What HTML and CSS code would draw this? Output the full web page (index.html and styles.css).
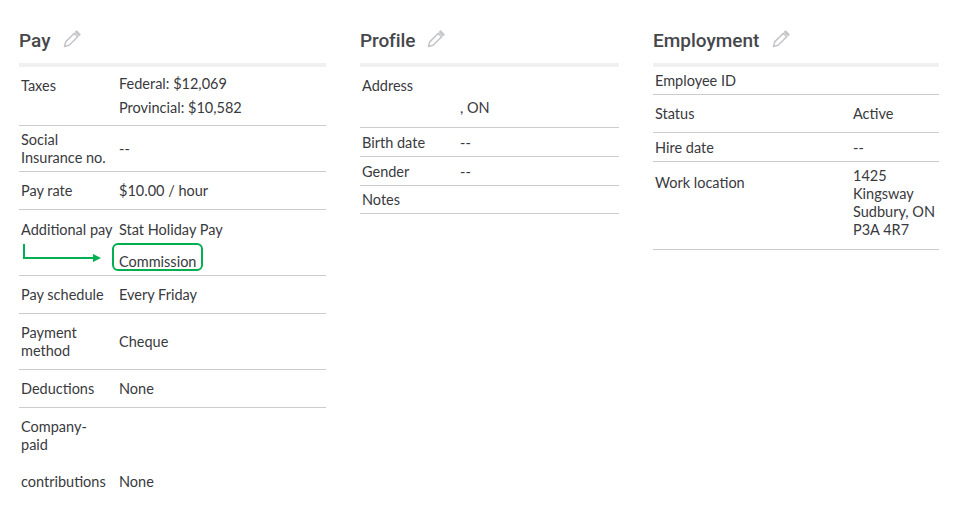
FILE: index.html
```html
<!DOCTYPE html>
<html>

<head lang="en">
    <meta charset="UTF-8">
    <title>Employee details</title>
    <link rel="stylesheet" href="styles.css">
</head>

<body>
    <div class="page">
        <div class="section section-pay">
            <div class="head">
                <h2>Pay</h2>
                <svg class="edit" width="18" height="18" viewBox="0 0 18 18"><path d="M1.5 16.500l1.200-4.600 8.600-8.600 3.400 3.400-8.600 8.600z" fill="none" stroke="#c4c6c9" stroke-width="1.600" stroke-linejoin="round"/><path d="M12.600 2l1-1 3.400 3.400-1 1z" fill="#c4c6c9" stroke="#c4c6c9" stroke-width="1.400" stroke-linejoin="round"/></svg>
            </div>
            <div class="row tall">
                <div class="label">Taxes</div>
                <div class="value">
                    <div class="line">Federal: $12,069</div>
                    <div class="line">Provincial: $10,582</div>
                </div>
            </div>
            <div class="row short-two">
                <div class="label">Social<br>Insurance no.</div>
                <div class="value">--</div>
            </div>
            <div class="row">
                <div class="label">Pay rate</div>
                <div class="value">$10.00 / hour</div>
            </div>
            <div class="row extra">
                <div class="label">Additional pay</div>
                <div class="value">
                    <div>Stat Holiday Pay</div>
                    <div class="commission">Commission<span class="callout"></span></div>
                </div>
                <svg class="arrow" width="80" height="18" viewBox="0 0 80 18"><path d="M1 0v14h70" fill="none" stroke="#00b050" stroke-width="2"/><path d="M70 10l8 4-8 4z" fill="#00b050"/></svg>
            </div>
            <div class="row">
                <div class="label">Pay schedule</div>
                <div class="value">Every Friday</div>
            </div>
            <div class="row">
                <div class="label">Payment<br>method</div>
                <div class="value">Cheque</div>
            </div>
            <div class="row">
                <div class="label">Deductions</div>
                <div class="value">None</div>
            </div>
            <div class="row last">
                <div class="label">Company-<br>paid<div class="gap">contributions</div></div>
                <div class="value">None</div>
            </div>
        </div>

        <div class="section section-profile">
            <div class="head">
                <h2>Profile</h2>
                <svg class="edit" width="18" height="18" viewBox="0 0 18 18"><path d="M1.5 16.500l1.200-4.600 8.600-8.600 3.400 3.400-8.600 8.600z" fill="none" stroke="#c4c6c9" stroke-width="1.600" stroke-linejoin="round"/><path d="M12.600 2l1-1 3.400 3.400-1 1z" fill="#c4c6c9" stroke="#c4c6c9" stroke-width="1.400" stroke-linejoin="round"/></svg>
            </div>
            <div class="row tall address">
                <div class="label">Address</div>
                <div class="value">
                    <div class="line">&nbsp;</div>
                    <div class="line">, ON</div>
                </div>
            </div>
            <div class="row slim">
                <div class="label">Birth date</div>
                <div class="value">--</div>
            </div>
            <div class="row slim">
                <div class="label">Gender</div>
                <div class="value">--</div>
            </div>
            <div class="row slimmer">
                <div class="label">Notes</div>
                <div class="value"></div>
            </div>
        </div>

        <div class="section section-job">
            <div class="head">
                <h2>Employment</h2>
                <svg class="edit" width="18" height="18" viewBox="0 0 18 18"><path d="M1.5 16.500l1.200-4.600 8.600-8.600 3.400 3.400-8.600 8.600z" fill="none" stroke="#c4c6c9" stroke-width="1.600" stroke-linejoin="round"/><path d="M12.600 2l1-1 3.400 3.400-1 1z" fill="#c4c6c9" stroke="#c4c6c9" stroke-width="1.400" stroke-linejoin="round"/></svg>
            </div>
            <div class="row slimmer">
                <div class="label">Employee ID</div>
                <div class="value"></div>
            </div>
            <div class="row">
                <div class="label">Status</div>
                <div class="value">Active</div>
            </div>
            <div class="row slim">
                <div class="label">Hire date</div>
                <div class="value">--</div>
            </div>
            <div class="row work">
                <div class="label">Work location</div>
                <div class="value">1425<br>Kingsway<br>Sudbury, ON<br>P3A 4R7</div>
            </div>
        </div>
    </div>
</body>

</html>
```

FILE: styles.css
```css
body {
    margin: 0;
    font-family: "Lato", "Liberation Sans", sans-serif;
    font-size: 14.5px;
    line-height: 18px;
    color: #393a3d;
    background: #fff;
}

.page {
    display: flex;
    align-items: flex-start;
    gap: 34px;
    padding-left: 19px;
}

.section-pay {
    width: 307px;
}

.section-profile {
    width: 259px;
}

.section-job {
    width: 286px;
}

.head {
    display: flex;
    align-items: flex-start;
    height: 34px;
    padding-top: 29px;
    border-bottom: 4px solid #f0f0f0;
}

.head h2 {
    margin: 0 13px 0 0;
    font-family: "Roboto", "Liberation Sans", sans-serif;
    font-size: 19px;
    font-weight: 500;
    line-height: 24px;
    color: #46474b;
}

.section-profile h2 {
    margin-right: 12px;
    letter-spacing: -0.1px;
}

.edit {
    margin-top: 1px;
}

.row {
    display: flex;
    align-items: center;
    padding: 10px 0 9px;
    border-bottom: 1px solid #ccc;
}

.label {
    flex: none;
    box-sizing: border-box;
    width: 100px;
    padding-left: 2px;
}

.section-job .label {
    width: 200px;
}

.row.tall {
    align-items: flex-start;
    padding: 5px 0;
}

.row.tall .label {
    padding-top: 5px;
}

.row.address {
    padding-bottom: 7px;
}

.line {
    line-height: 24px;
}

.row.short-two {
    padding: 5px 0 4px;
}

.row.slim {
    padding: 6px 0 4px;
}

.row.slimmer {
    padding: 5px 0 4px;
}

.row.extra {
    position: relative;
    align-items: flex-start;
    padding: 11px 0 4px;
}

.commission {
    position: relative;
    margin-top: 14px;
}

.callout {
    position: absolute;
    left: -7px;
    top: -10px;
    width: 87px;
    height: 24px;
    border: 2px solid #00b050;
    border-radius: 6px;
}

.arrow {
    position: absolute;
    left: 4px;
    top: 34px;
}

.row.last {
    border-bottom: 0;
    align-items: flex-end;
}

.gap {
    margin-top: 19px;
}

.row.work {
    align-items: flex-start;
    padding: 5px 0 10px;
}

.row.work .label {
    padding-top: 7px;
}
```
